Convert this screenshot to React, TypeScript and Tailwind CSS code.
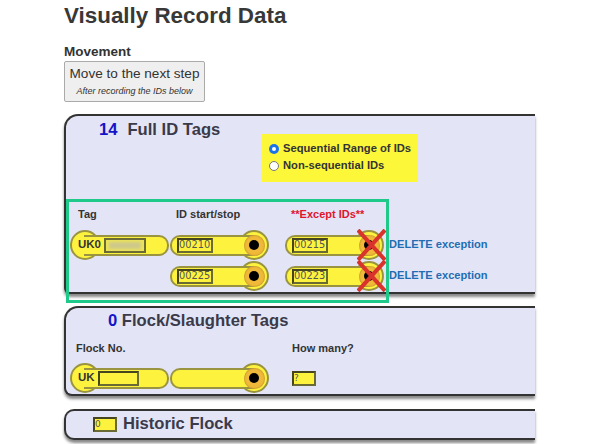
const sans = 'font-["Liberation_Sans",Arial,sans-serif]';

function Field({ value, className }: { value?: string; className: string }) {
  return (
    <span
      className={`flex items-center overflow-hidden border-2 border-t-[#45451f] border-l-[#45451f] border-r-[#6a6a35] border-b-[#6a6a35] bg-[#fdf33f] font-["DejaVu_Sans",sans-serif] leading-none text-[#555] ${className}`}
    >
      {value}
    </span>
  );
}

// tag with the punched hole on its right
function IdTag({ value }: { value?: string }) {
  return (
    <div className="flex h-[30px] w-[99px] items-center">
      <div className="relative z-10 -mr-[16px] flex h-[21px] flex-1 items-center rounded-l-[10px] border-2 border-r-0 border-[#9a9440] bg-[#fdf33f] pl-[5px]">
        {value && <Field value={value} className="h-[15px] w-[36px] text-[9.8px]" />}
      </div>
      <span className="flex h-[30px] w-[30px] shrink-0 items-center justify-center rounded-full border-2 border-[#9a9440] bg-[#fdf33f]">
        <span className="relative z-20 flex h-[21px] w-[21px] items-center justify-center rounded-full bg-[#f0b93a] shadow-[inset_0_0_2px_#a07a20]">
          <span className="h-[10px] w-[10px] rounded-full bg-black" />
        </span>
      </span>
    </div>
  );
}

// tag with the round head on its left
function HeadTag({ label, children }: { label: string; children: React.ReactNode }) {
  return (
    <div className="flex h-[30px] w-[99px] items-center">
      <span className="h-[30px] w-[30px] shrink-0 rounded-full border-2 border-[#9a9440] bg-[#fdf33f]" />
      <div className="relative z-10 -ml-[16px] flex h-[21px] flex-1 items-center gap-[3px] rounded-r-[10px] border-2 border-l-0 border-[#9a9440] bg-[#fdf33f] text-[11.5px] font-bold text-[#333]">
        <span className="-ml-[6px]">{label}</span>
        {children}
      </div>
    </div>
  );
}

function Cross() {
  return (
    <svg className="absolute -right-[2px] -top-[1px] z-30 h-[32px] w-[29px]" viewBox="0 0 29 32">
      <path d="M1 1 L28 31 M28 1 L1 31" stroke="#d9342b" strokeWidth="4" fill="none" />
    </svg>
  );
}

function ExceptRow({ value }: { value: string }) {
  return (
    <div className="flex items-center gap-[5px]">
      <div className="relative">
        <IdTag value={value} />
        <Cross />
      </div>
      <span className="whitespace-nowrap text-[11.1px] font-bold leading-none text-[#1f6db3]">DELETE exception</span>
    </div>
  );
}

export default function App() {
  return (
    <div className={`${sans} h-[444px] w-[592px] overflow-hidden bg-white pl-[64px] text-[#333]`}>
      <div className="w-[471px]">
        <h1 className="pt-[4px] text-[22.4px] font-bold leading-[24px] text-[#383838]">Visually Record Data</h1>
        <div className="mt-[17px] text-[13.5px] font-bold leading-[14px]">Movement</div>
        <div className="mt-[2px] flex h-[41px] w-[141px] flex-col items-center justify-center rounded-[2px] border border-[#aaa] bg-[#efefef]">
          <span className="text-[13.6px] leading-[18px] text-[#333]">Move to the next step</span>
          <span className="text-[9px] italic leading-[16px] text-[#333]">After recording the IDs below</span>
        </div>

        <section className="relative mt-[12px] h-[180px] rounded-tl-[14px] rounded-bl-[6px] border-y-2 border-l-2 border-[#333] bg-[#e3e5f6] shadow-[0_3px_3px_#888]">
          <div className="pl-[33px] pt-[2px] text-[16.6px] font-bold leading-[24px] text-[#3a3a4a]">
            <span className="text-[#1414c8]">14</span>
            <span className="ml-[10px]">Full ID Tags</span>
          </div>
          <div className="-mt-[8px] ml-[196px] h-[48px] w-[156px] bg-[#fdf73a] pl-[7px] pt-[6px] text-[11.2px] font-bold leading-[17px] text-[#333]">
            <label className="flex items-center gap-[4px]">
              <span className="flex h-[10px] w-[10px] items-center justify-center rounded-full bg-[#1a73e8]">
                <span className="h-[4px] w-[4px] rounded-full bg-white" />
              </span>
              Sequential Range of IDs
            </label>
            <label className="flex items-center gap-[4px]">
              <span className="h-[10px] w-[10px] rounded-full border border-[#777] bg-white" />
              Non-sequential IDs
            </label>
          </div>
          <div className="mt-[25px] grid grid-cols-[98px_115px_1fr] pl-[12px] text-[11px] font-bold leading-[14px]">
            <span>Tag</span>
            <span>ID start/stop</span>
            <span className="text-[#e0142f]">**Except IDs**</span>
          </div>
          <div className="mt-[9px] grid grid-cols-[100px_115px_1fr] gap-y-[1px] pl-[4px]">
            <HeadTag label="UK0">
              <span className="flex h-[15px] w-[42px] items-center justify-center border-2 border-[#6a6a35] bg-[#ece35a]">
                <span className="h-[7px] w-[32px] bg-[#cfc98a] blur-[1.5px]" />
              </span>
            </HeadTag>
            <IdTag value="00210" />
            <ExceptRow value="00215" />
            <span />
            <IdTag value="00225" />
            <ExceptRow value="00223" />
          </div>
          <div className="absolute -bottom-[11px] left-0 top-[83px] z-40 w-[323px] border-[3px] border-[#1fc98a]" />
        </section>

        <section className="mt-[12px] h-[90px] rounded-tl-[14px] rounded-bl-[8px] border-y-2 border-l-2 border-[#333] bg-[#e3e5f6] shadow-[0_3px_3px_#888]">
          <div className="pl-[42px] pt-[2px] text-[16.6px] font-bold leading-[22px] text-[#3a3a4a]">
            <span className="text-[#1414c8]">0</span> Flock/Slaughter Tags
          </div>
          <div className="mt-[9px] grid grid-cols-[216px_1fr] pl-[10px] text-[11px] font-bold leading-[14px]">
            <span>Flock No.</span>
            <span>How many?</span>
          </div>
          <div className="mt-[8px] flex items-center pl-[4px]">
            <HeadTag label="UK">
              <Field className="h-[15px] w-[41px]" />
            </HeadTag>
            <span className="w-[1px]" />
            <IdTag />
            <Field value="?" className="ml-[23px] h-[15px] w-[24px] text-[9px]" />
          </div>
        </section>

        <section className="mt-[13px] flex h-[31px] items-center rounded-l-[10px] border-y-2 border-l-2 border-[#333] bg-[#e3e5f6] pl-[27px] shadow-[0_3px_3px_#888]">
          <Field value="0" className="h-[15px] w-[24px] text-[9px]" />
          <span className="ml-[6px] text-[16.6px] font-bold text-[#3a3a4a]">Historic Flock</span>
        </section>
      </div>
    </div>
  );
}
